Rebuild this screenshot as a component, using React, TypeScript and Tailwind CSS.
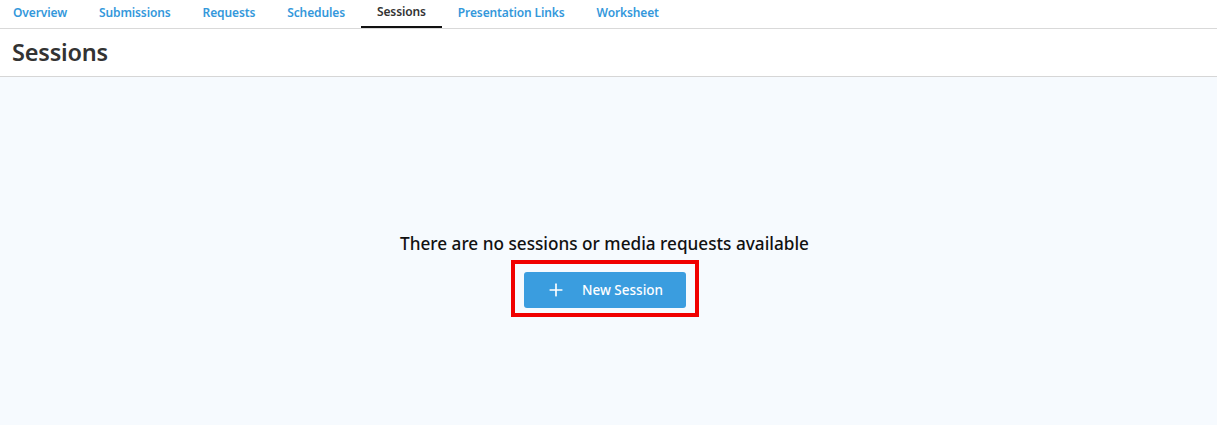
import { Plus } from "lucide-react";

const TABS = [
  "Overview",
  "Submissions",
  "Requests",
  "Schedules",
  "Sessions",
  "Presentation Links",
  "Worksheet",
];

export default function App() {
  const active = "Sessions";

  return (
    <div className="flex min-h-[425px] flex-col bg-[#f6fafe] font-['Noto_Sans',sans-serif]">
      <nav className="flex h-[29px] border-b border-[#d9d9d9] bg-white">
        <div className="-ml-[3px] flex">
          {TABS.map((tab) => (
            <button
              key={tab}
              type="button"
              className={`h-[28px] px-4 pb-[2px] text-[12px] font-semibold tracking-[-0.12px] ${
                tab === active
                  ? "border-b-2 border-[#111] text-[#333]"
                  : "text-[#3498db]"
              }`}
            >
              {tab}
            </button>
          ))}
        </div>
      </nav>

      <header className="flex h-[48px] items-center border-b border-[#d6d6d6] bg-white px-3">
        <h1 className="text-[23.5px] font-semibold tracking-[-0.2px] text-[#333]">Sessions</h1>
      </header>

      <main className="flex flex-1 flex-col items-center pr-2 pt-[155px]">
        <p className="text-[17.2px] font-medium leading-6 text-[#111]">
          There are no sessions or media requests available
        </p>
        <div className="mt-[4px] border-4 border-[#f00000] px-[9px] pb-[5px] pt-[8px]">
          <button
            type="button"
            className="flex h-[36px] w-[162px] items-center justify-center gap-[16px] rounded-[3px] bg-[#3a9ddf] text-[13.5px] font-medium text-white"
          >
            <Plus className="h-5 w-5" strokeWidth={2} />
            New Session
          </button>
        </div>
      </main>
    </div>
  );
}
